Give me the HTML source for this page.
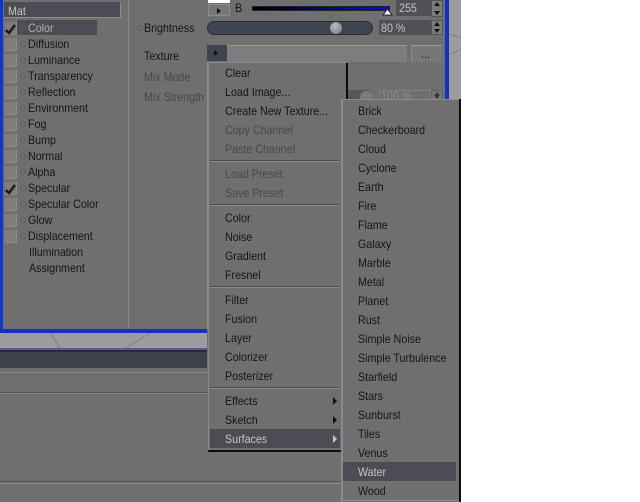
<!DOCTYPE html>
<html><head><meta charset="utf-8"><style>
html,body{margin:0;padding:0;background:#fff}
#p{position:relative;width:640px;height:502px;overflow:hidden;background:#fff;font:12px/14px "Liberation Sans",sans-serif;color:#151515}
#p div{position:absolute}
.t{white-space:nowrap;transform:scaleX(.89);transform-origin:0 0}
.d{color:#484848}
.l{color:#c4c4c4}
.cb{left:5px;width:11px;height:12px;background:#7e7e7e;border-right:1px solid #8c8c8c;border-bottom:1px solid #8c8c8c}
.o{left:20px;width:4px;height:4px;border:1px solid #5c5c5c;border-radius:50%}
.sep{height:1px;background:#4e4e4e;border-bottom:1px solid #8a8a8a;left:210px;width:130px}
.sp{width:10px;background:#7b7b7b;border:1px solid #555}
.sp:before{content:"";position:absolute;left:2px;top:1px;border:3px solid transparent;border-top:0;border-bottom:4px solid #111}
.sp:after{content:"";position:absolute;left:2px;bottom:1px;border:3px solid transparent;border-bottom:0;border-top:4px solid #111}
</style></head><body><div id="p">
<!-- window -->
<div style="left:0;top:0;width:461px;height:502px;background:#6f6f6f"></div>
<!-- viewport -->
<div style="left:449px;top:0;width:12px;height:100px;background:#9c9c9c"></div>
<div style="left:0;top:333px;width:207px;height:15px;background:#9c9c9c"></div>
<svg style="position:absolute;left:0;top:333px" width="210" height="16"><path d="M50 0L60 15M150 0L126 15" stroke="#808080" fill="none"/></svg>
<svg style="position:absolute;left:449px;top:25px" width="12" height="40"><path d="M0 9L12 13M0 30L12 24" stroke="#808080" fill="none"/></svg>
<!-- blue frame -->
<div style="left:0;top:0;width:3px;height:333px;background:#0f38c8"></div>
<div style="left:0;top:329px;width:207px;height:4px;background:#0f34c0"></div>
<div style="left:445px;top:0;width:4px;height:100px;background:#0f34c0"></div>
<div style="left:0;top:348px;width:207px;height:2px;background:#5a55a8"></div>
<div style="left:0;top:350px;width:207px;height:2px;background:#2a2a30"></div>
<div style="left:0;top:352px;width:207px;height:16px;background:#3e414b"></div>
<div style="left:0;top:372px;width:208px;height:1px;background:#8a8a8a"></div>
<div style="left:0;top:392px;width:208px;height:1px;background:#555"></div>
<div style="left:0;top:393px;width:208px;height:1px;background:#828282"></div>
<div style="left:0;top:481px;width:342px;height:1px;background:#545454"></div>
<div style="left:0;top:483px;width:342px;height:1px;background:#8a8a8a"></div>
<div style="left:128px;top:0;width:1px;height:329px;background:#8a8a8a"></div>
<div style="left:207px;top:60px;width:1px;height:269px;background:#8c8c8c"></div>
<!-- name -->
<div style="left:4px;top:2px;width:116px;height:15px;background:#4b4c54;border-bottom:1px solid #8e8e8e;border-right:1px solid #8e8e8e"></div>
<div class="t l" style="left:8px;top:4px">Mat</div>
<!-- channel list -->
<div style="left:17px;top:20px;width:80px;height:15px;background:#4b4c54"></div>
<div class="cb" style="top:22px"></div><div class="cb" style="top:38px"></div><div class="cb" style="top:54px"></div><div class="cb" style="top:70px"></div><div class="cb" style="top:86px"></div><div class="cb" style="top:102px"></div><div class="cb" style="top:118px"></div><div class="cb" style="top:134px"></div><div class="cb" style="top:150px"></div><div class="cb" style="top:166px"></div><div class="cb" style="top:182px"></div><div class="cb" style="top:198px"></div><div class="cb" style="top:214px"></div><div class="cb" style="top:230px"></div>
<svg style="position:absolute;left:4px;top:22px" width="14" height="14"><path d="M2 8L5 11L11 3" stroke="#1c1c1c" stroke-width="2.600" fill="none"/></svg>
<svg style="position:absolute;left:4px;top:182px" width="14" height="14"><path d="M2 8L5 11L11 3" stroke="#1c1c1c" stroke-width="2.600" fill="none"/></svg>
<div class="o" style="top:25px"></div><div class="o" style="top:41px"></div><div class="o" style="top:57px"></div><div class="o" style="top:73px"></div><div class="o" style="top:89px"></div><div class="o" style="top:105px"></div><div class="o" style="top:121px"></div><div class="o" style="top:137px"></div><div class="o" style="top:153px"></div><div class="o" style="top:169px"></div><div class="o" style="top:185px"></div><div class="o" style="top:201px"></div><div class="o" style="top:217px"></div><div class="o" style="top:233px"></div>
<div class="t" style="left:28px;top:21px;color:#b0b0b0">Color</div>
<div class="t" style="left:28px;top:37px">Diffusion</div>
<div class="t" style="left:28px;top:53px">Luminance</div>
<div class="t" style="left:28px;top:69px">Transparency</div>
<div class="t" style="left:28px;top:85px">Reflection</div>
<div class="t" style="left:28px;top:101px">Environment</div>
<div class="t" style="left:28px;top:117px">Fog</div>
<div class="t" style="left:28px;top:133px">Bump</div>
<div class="t" style="left:28px;top:149px">Normal</div>
<div class="t" style="left:28px;top:165px">Alpha</div>
<div class="t" style="left:28px;top:181px">Specular</div>
<div class="t" style="left:28px;top:197px">Specular Color</div>
<div class="t" style="left:28px;top:213px">Glow</div>
<div class="t" style="left:28px;top:229px">Displacement</div>
<div class="t" style="left:29px;top:245px">Illumination</div>
<div class="t" style="left:29px;top:261px">Assignment</div>
<!-- top controls -->
<div style="left:208px;top:0;width:22px;height:3px;background:#fff"></div>
<div style="left:208px;top:4px;width:22px;height:12px;background:#777;border:1px solid #8c8c8c;box-sizing:border-box"></div>
<div style="left:217px;top:8px;border:3px solid transparent;border-left:4px solid #111;border-right:0"></div>
<div class="t" style="left:235px;top:1px">B</div>
<div style="left:252px;top:6px;width:136px;background:linear-gradient(90deg,#000,#0a0ad8);border:1px solid #222;height:3px"></div>
<svg style="position:absolute;left:382px;top:9px" width="12" height="7"><path d="M1 6L5.500 0L10 6Z" fill="#fff" stroke="#222"/></svg>
<div style="left:396px;top:0;width:35px;height:16px;background:#4f5058"></div>
<div class="t l" style="left:399px;top:1px">255</div>
<div class="sp" style="left:431px;top:0;height:15px"></div>
<div class="o" style="left:137px;top:25px"></div>
<div class="t" style="left:144px;top:21px">Brightness</div>
<div style="left:207px;top:21px;width:166px;height:14px;background:#3e4450;border-radius:7px;border:1px solid #2c2e34;box-sizing:border-box"></div>
<div style="left:330px;top:22px;width:12px;height:12px;border-radius:50%;background:radial-gradient(circle at 40% 35%,#bbb,#777)"></div>
<div style="left:379px;top:20px;width:52px;height:15px;background:#4f5058"></div>
<div class="t l" style="left:381px;top:21px">80 %</div>
<div class="sp" style="left:431px;top:20px;height:13px"></div>
<div class="t" style="left:144px;top:49px">Texture</div>
<div class="t d" style="left:144px;top:70px">Mix Mode</div>
<div class="t d" style="left:144px;top:90px">Mix Strength</div>
<div style="left:207px;top:45px;width:20px;height:16px;background:#40444f"></div>
<div style="left:214px;top:50px;border:3px solid transparent;border-left:4px solid #111;border-right:0"></div>
<div style="left:227px;top:45px;width:180px;height:17px;background:#7d7d7d;border-top:1px solid #999;box-sizing:border-box"></div>
<div style="left:411px;top:45px;width:31px;height:17px;background:#777;border-top:1px solid #999;border-left:1px solid #8c8c8c;box-sizing:border-box"></div>
<div class="t" style="left:421px;top:47px">...</div>
<!-- behind menu -->
<div style="left:346px;top:63px;width:2px;height:37px;background:#0c0c0c"></div>
<div style="left:348px;top:90px;width:25px;height:10px;background:#55565c;border-radius:0 7px 0 0"></div>
<div style="left:360px;top:91px;width:13px;height:12px;border-radius:50%;background:#7c7c7c"></div>
<div style="left:379px;top:90px;width:52px;height:10px;background:#6f6f6f;border:1px solid #828282;box-sizing:border-box;overflow:hidden"></div>
<div class="t" style="left:381px;top:89px;color:#8e8e8e">100 %</div>
<div class="sp" style="left:431px;top:90px;height:9px;opacity:.6"></div>
<!-- menu -->
<div style="left:208px;top:62px;width:138px;height:388px;background:#6f6f6f;border-top:1px solid #8a8a8a;border-left:1px solid #8a8a8a;box-sizing:border-box"></div>
<div style="left:208px;top:450px;width:134px;height:2px;background:#0e0e0e"></div>
<div style="left:210px;top:429px;width:130px;height:19px;background:#4b4c54"></div>
<div class="sep" style="top:160px"></div><div class="sep" style="top:204px"></div><div class="sep" style="top:286px"></div><div class="sep" style="top:387px"></div>
<div class="t" style="left:225px;top:66px">Clear</div>
<div class="t" style="left:225px;top:85px">Load Image...</div>
<div class="t" style="left:225px;top:104px">Create New Texture...</div>
<div class="t d" style="left:225px;top:123px">Copy Channel</div>
<div class="t d" style="left:225px;top:142px">Paste Channel</div>
<div class="t d" style="left:225px;top:167px">Load Preset</div>
<div class="t d" style="left:225px;top:186px">Save Preset</div>
<div class="t" style="left:225px;top:211px">Color</div>
<div class="t" style="left:225px;top:230px">Noise</div>
<div class="t" style="left:225px;top:249px">Gradient</div>
<div class="t" style="left:225px;top:268px">Fresnel</div>
<div class="t" style="left:225px;top:293px">Filter</div>
<div class="t" style="left:225px;top:312px">Fusion</div>
<div class="t" style="left:225px;top:331px">Layer</div>
<div class="t" style="left:225px;top:350px">Colorizer</div>
<div class="t" style="left:225px;top:369px">Posterizer</div>
<div class="t" style="left:225px;top:394px">Effects</div>
<div class="t" style="left:225px;top:413px">Sketch</div>
<div class="t l" style="left:225px;top:432px">Surfaces</div>
<div style="left:333px;top:397px;border:4px solid transparent;border-left:4px solid #111;border-right:0"></div>
<div style="left:333px;top:416px;border:4px solid transparent;border-left:4px solid #111;border-right:0"></div>
<div style="left:333px;top:435px;border:4px solid transparent;border-left:4px solid #c4c4c4;border-right:0"></div>
<!-- submenu -->
<div style="left:341px;top:99px;width:118px;height:403px;background:#6f6f6f;border-top:1px solid #8a8a8a;border-left:2px solid #8a8a8a;box-sizing:border-box"></div>
<div style="left:459px;top:99px;width:2px;height:403px;background:#0c0c0c"></div>
<div style="left:343px;top:462px;width:113px;height:19px;background:#4b4c54"></div>
<div class="t" style="left:358px;top:104px">Brick</div>
<div class="t" style="left:358px;top:123px">Checkerboard</div>
<div class="t" style="left:358px;top:142px">Cloud</div>
<div class="t" style="left:358px;top:161px">Cyclone</div>
<div class="t" style="left:358px;top:180px">Earth</div>
<div class="t" style="left:358px;top:199px">Fire</div>
<div class="t" style="left:358px;top:218px">Flame</div>
<div class="t" style="left:358px;top:237px">Galaxy</div>
<div class="t" style="left:358px;top:256px">Marble</div>
<div class="t" style="left:358px;top:275px">Metal</div>
<div class="t" style="left:358px;top:294px">Planet</div>
<div class="t" style="left:358px;top:313px">Rust</div>
<div class="t" style="left:358px;top:332px">Simple Noise</div>
<div class="t" style="left:358px;top:351px">Simple Turbulence</div>
<div class="t" style="left:358px;top:370px">Starfield</div>
<div class="t" style="left:358px;top:389px">Stars</div>
<div class="t" style="left:358px;top:408px">Sunburst</div>
<div class="t" style="left:358px;top:427px">Tiles</div>
<div class="t" style="left:358px;top:446px">Venus</div>
<div class="t l" style="left:358px;top:465px">Water</div>
<div class="t" style="left:358px;top:484px">Wood</div>
<div style="left:341px;top:500px;width:118px;height:1px;background:#8a8a8a"></div>
</div></body></html>
